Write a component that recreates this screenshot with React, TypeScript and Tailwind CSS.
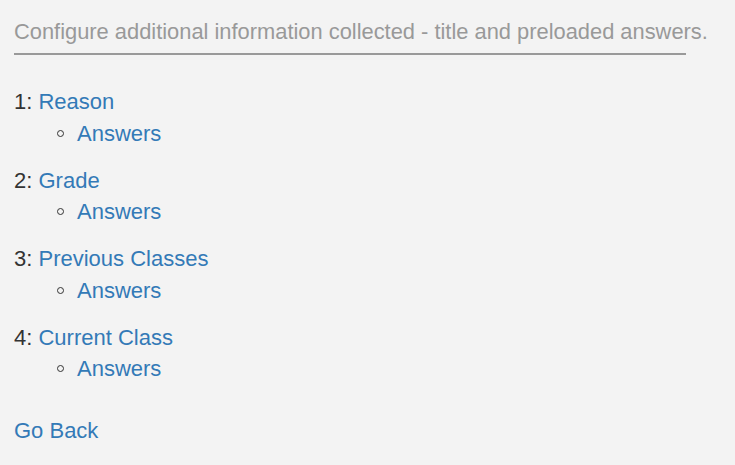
import React from "react";

const fields = ["Reason", "Grade", "Previous Classes", "Current Class"];

export default function App() {
  return (
    <div className="min-h-screen bg-[#f3f3f3] px-[14px] pt-[16px] text-[22px] leading-[1.42857] text-[#333] font-['Liberation_Sans',Arial,sans-serif]">
      <div className="w-[672px] whitespace-nowrap border-b-2 border-[#999] pb-[6px] text-[21.87px] leading-[31.4px] text-[#999]">
        Configure additional information collected - title and preloaded answers.
      </div>

      <div className="mt-[31px] flex flex-col gap-[15.6px]">
        {fields.map((f, i) => (
          <div key={f}>
            <div>
              {i + 1}: <a href="#" className="text-[#337ab7]">{f}</a>
            </div>
            <div className="flex items-center pl-[43px]">
              <span className="mr-[13px] inline-block h-[7px] w-[7px] rounded-full border border-[#333]" />
              <a href="#" className="text-[#337ab7]">Answers</a>
            </div>
          </div>
        ))}
      </div>

      <div className="mt-[30px]">
        <a href="#" className="text-[#337ab7]">Go Back</a>
      </div>
    </div>
  );
}
